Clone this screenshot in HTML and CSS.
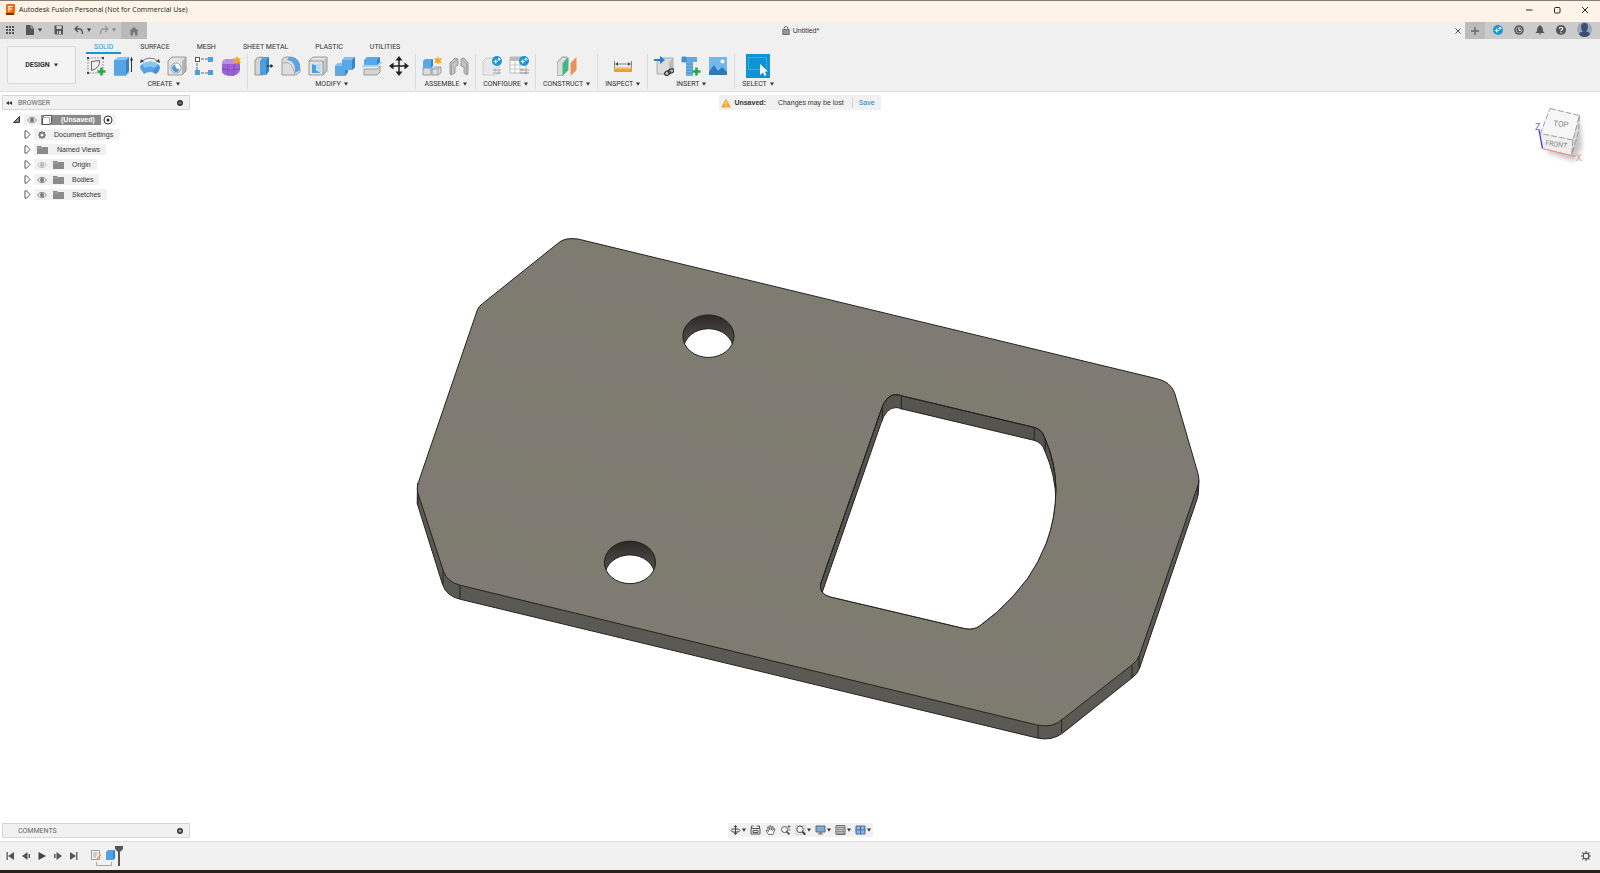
FILE: index.html
```html
<!DOCTYPE html>
<html lang="en">
<head>
  <meta charset="UTF-8">
  <meta name="viewport" content="width=device-width, initial-scale=1.0">
  <title>Autodesk Fusion Personal (Not for Commercial Use)</title>
  <link rel="stylesheet" href="styles.css">
</head>
<body>

<!-- shared symbols -->
<svg class="sprite" aria-hidden="true">
  <symbol id="caret" viewBox="0 0 4 4"><path d="M0 .5h4L2 3.8z" fill="#333"/></symbol>
  <symbol id="eye" viewBox="0 0 10 8"><path d="M.5 4Q5-1.5 9.500 4Q5 9.500.5 4z" fill="#eee" stroke="#888"/><circle cx="5" cy="4" r="2" fill="#777"/></symbol>
  <symbol id="folder" viewBox="0 0 11 9"><path d="M0 1h4l1 1h6v7H0z" fill="#8b8b8b"/><path d="M0 3h5l1-1" stroke="#bbb" fill="none" stroke-width=".6"/></symbol>
  <symbol id="expand" viewBox="0 0 7 9"><path d="M1 .8h1.500L6 4.500 2.500 8.200H1z" fill="#fff" stroke="#555"/></symbol>
  <symbol id="plus-badge" viewBox="0 0 10 10"><circle cx="5" cy="5" r="5" fill="#1a96d8"/><path d="M3.800 3.500v4M1.800 5.500h4M7 1.800v3M5.500 3.300h3" stroke="#fff" stroke-width="1.100"/></symbol>
</svg>

<header class="titlebar">
  <svg class="app-icon" viewBox="0 0 10 11"><path d="M1 1l1-1h8v9l-1 1H1z" fill="#f46b10"/><path d="M1 9h8v2H1z" fill="#7c2c05"/><path d="M4 8V2.500h3.500M4 5h3" stroke="#fff" stroke-width="1.200" fill="none"/></svg>
  <span class="title">Autodesk Fusion Personal (Not for Commercial Use)</span>
  <div class="window-buttons">
    <button aria-label="Minimize"><svg viewBox="0 0 8 8"><path d="M1 4h6.500" stroke="#222"/></svg></button>
    <button aria-label="Maximize"><svg viewBox="0 0 8 8"><rect x="1.500" y="1.500" width="5.500" height="5.500" rx="1" fill="none" stroke="#222"/></svg></button>
    <button aria-label="Close"><svg viewBox="0 0 8 8"><path d="M1 1l6 6M7 1L1 7" stroke="#222"/></svg></button>
  </div>
</header>

<nav class="docbar">
  <div class="quick">
    <button class="q-grid" aria-label="Data panel"><svg viewBox="0 0 10 10" fill="#555"><path d="M1 1h2v2H1zM4 1h2v2H4zM7 1h2v2H7zM1 4h2v2H1zM4 4h2v2H4zM7 4h2v2H7zM1 7h2v2H1zM4 7h2v2H4zM7 7h2v2H7z"/></svg></button>
    <button class="q-file" aria-label="File"><svg viewBox="0 0 10 10"><path d="M1 0h5l3 3v7H1z" fill="#555"/><path d="M6 0v3h3" fill="none" stroke="#ccc" stroke-width=".8"/></svg><svg class="caret"><use href="#caret"/></svg></button>
    <button class="q-save" aria-label="Save"><svg viewBox="0 0 10 10"><path d="M.5.5h8.500v9H1.500l-1-1z" fill="#555"/><path d="M2.500 1h5v3h-5zM3 6h4v3H3z" fill="#ccc"/><path d="M4 6h1v3H4z" fill="#555"/></svg></button>
    <button class="q-undo" aria-label="Undo"><svg viewBox="0 0 10 10"><path d="M4 1L1 4l3 3M1 4h4.500Q8.500 4 8.500 9" fill="none" stroke="#555" stroke-width="1.400"/></svg><svg class="caret"><use href="#caret"/></svg></button>
    <button class="q-redo" aria-label="Redo"><svg viewBox="0 0 10 10"><path d="M6 1l3 3-3 3M9 4H4.500Q1.500 4 1.500 9" fill="none" stroke="#999" stroke-width="1.400"/></svg><svg class="caret off"><use href="#caret"/></svg></button>
  </div>
  <button class="home-tab" aria-label="Home"><svg viewBox="0 0 10 10"><path d="M5 1l4.500 4H8.500v4.500h-2.500V6.500H4v3H1.500V5H.5z" fill="#777"/></svg></button>
  <div class="doc-tab">
    <svg viewBox="0 0 8 10"><path d="M2 4V2.500a2 2 0 014 0V4" fill="none" stroke="#666"/><rect x=".5" y="4" width="7" height="5.500" fill="#999" stroke="#666"/></svg>
    <span>Untitled*</span>
    <button class="close-tab" aria-label="Close tab"><svg viewBox="0 0 8 8"><path d="M1.500 1.500l5 5M6.500 1.500l-5 5" stroke="#555"/></svg></button>
  </div>
  <button class="new-tab" aria-label="New tab"><svg viewBox="0 0 8 8"><path d="M4 0v8M0 4h8" stroke="#666" stroke-width="1.300"/></svg></button>
  <div class="account">
    <button aria-label="Extensions"><svg viewBox="0 0 10 10"><use href="#plus-badge"/></svg></button>
    <button aria-label="Job status"><svg viewBox="0 0 10 10"><circle cx="5" cy="5" r="4.800" fill="#555"/><circle cx="5" cy="5" r="3" fill="none" stroke="#ccc" stroke-width=".7"/><path d="M5 3v2.300h2" stroke="#fff" fill="none"/></svg></button>
    <button aria-label="Notifications"><svg viewBox="0 0 10 10"><path d="M5 0l1 1Q8 2 8 6l1.500 2h-9L2 6Q2 2 4 1zM3.800 8.500h2.400L5 10z" fill="#555"/></svg></button>
    <button aria-label="Help"><svg viewBox="0 0 10 10"><circle cx="5" cy="5" r="5" fill="#555"/><path d="M3.300 3.800Q3.300 2.200 5 2.200t1.700 1.500Q6.700 4.600 5 5.200V6.300M5 7.200v1.200" stroke="#fff" stroke-width="1.100" fill="none"/></svg></button>
    <button class="avatar" aria-label="Profile"><svg viewBox="0 0 15 15"><circle cx="7.500" cy="7.500" r="7.500" fill="#9aa8ba"/><path d="M4 5a3.500 4 0 017 0q0 3-2 4.500 4 .5 4 3Q10.500 15 7.500 15T2 12.500q0-2.500 4-3Q4 8 4 5z" fill="#3b4f70"/></svg></button>
  </div>
</nav>

<section class="ribbon">
  <button class="workspace">DESIGN <svg class="caret"><use href="#caret"/></svg></button>
  <div class="ribbon-main">
    <div class="tabs" role="tablist">
      <button class="tab active" role="tab">SOLID</button>
      <button class="tab" role="tab">SURFACE</button>
      <button class="tab" role="tab">MESH</button>
      <button class="tab" role="tab">SHEET METAL</button>
      <button class="tab" role="tab">PLASTIC</button>
      <button class="tab" role="tab">UTILITIES</button>
    </div>
    <div class="groups">
      <div class="group">
        <div class="tools">
          <button aria-label="Create sketch"><svg viewBox="0 0 20 20"><path d="M2 2h15v15H2z" fill="none" stroke="#999" stroke-dasharray="2 1"/><path d="M5.500 14.500v-9l8-1q1 7-8 10z" fill="#eee" stroke="#666"/><path d="M1 1h2v2H1zM16 1h2v2h-2zM1 16h2v2H1z" fill="#444"/><path d="M15.500 11.500v8M11.500 15.500h8" stroke="#28a745" stroke-width="2.600"/></svg></button>
          <button aria-label="Extrude"><svg viewBox="0 0 20 20"><path d="M1 4l4-3h11l-3 3z" fill="#8ac6f3"/><path d="M1 4h12v15H1z" fill="#55a5e5"/><path d="M13 4l3-3v14l-3 4z" fill="#3584c5"/><path d="M1 19.500h12l4-4" fill="none" stroke="#aaa"/><path d="M18.500 2v14" stroke="#333"/><path d="M17 4.500L18.500.5l1.500 4z" fill="#333"/></svg></button>
          <button aria-label="Revolve"><svg viewBox="0 0 20 20"><path d="M1 6Q10-2 19 6" fill="none" stroke="#555" stroke-width=".8"/><path d="M0 7l1-4 3 2.500zM20 7l-1-4-3 2.500z" fill="#444"/><path d="M2 8q8-5 16 0 2 1 2 4l-4 6q-6-4-12 0L0 12q0-3 2-4z" fill="#55a5e5"/><path d="M2 8q8-5 16 0l-3 4q-5-3-10 0z" fill="#8ac6f3"/><ellipse cx="16.500" cy="14" rx="2.500" ry="4" fill="#4994d2" transform="rotate(30 16.500 14)"/></svg></button>
          <button aria-label="Hole"><svg viewBox="0 0 20 20"><path d="M1 5l4-4h14v14l-4 4H1z" fill="#e2e2e2"/><path d="M15 5l4-4v14l-4 4z" fill="#b5b5b5"/><path d="M1 5l4-4h14v14l-4 4H1z" fill="none" stroke="#888" stroke-width=".8"/><circle cx="9" cy="12" r="5" fill="#fff" stroke="#888" stroke-width=".8"/><path d="M8 8.200A4 4 0 1012.800 13.500Q8 13 8 8.200z" fill="#4a9bd9"/></svg></button>
          <button aria-label="Pattern"><svg viewBox="0 0 20 20"><path d="M3 3h14M3 3v14M3 17h14" stroke="#666" stroke-dasharray="3 1"/><rect x="1.500" y="1.500" width="4" height="4" fill="#fff" stroke="#555"/><path d="M14 1h5v5h-5zM1 14h5v5H1zM14 14h5v5h-5z" fill="#4d9fde"/></svg></button>
          <button aria-label="Create form"><svg viewBox="0 0 20 20"><path d="M1 8q0-5 6-5h6q6 1 6 6v5q-1 5-8 6Q2 20 1 16z" fill="#9a63d3"/><path d="M1 8q0-5 6-5h6q5 0 5 3l-5 2H2z" fill="#bb91e8"/><path d="M13 8q1 6-1 12M7 8q-1 6 0 11M1 13q8 2 18 0" stroke="#7d4cba" stroke-width=".8" fill="none"/><path d="M16 0l1.200 2.500L20 2l-1.500 2.500L20 7l-2.800-.5L16 9l-1.200-2.500L12 7l1.500-2.500L12 2l2.800.5z" fill="#f7a520"/></svg></button>
        </div>
        <button class="label">CREATE <svg class="caret"><use href="#caret"/></svg></button>
      </div>
      <div class="group">
        <div class="tools">
          <button aria-label="Press pull"><svg viewBox="0 0 20 20"><path d="M1 5q1-4 5-4h3v18H1z" fill="#d5d5d5" stroke="#888" stroke-width=".8"/><path d="M6 5l3-4h6v14l-3 4H6z" fill="#4d9fde"/><path d="M12 5l3-4v14l-3 4z" fill="#3482c2"/><path d="M13 10h5" stroke="#222"/><path d="M16.500 8l3 2-3 2z" fill="#222"/></svg></button>
          <button aria-label="Fillet"><svg viewBox="0 0 20 20"><path d="M1 5q0-4 5-4h4q9 1 9 12v3l-4 3H1z" fill="#ddd" stroke="#888" stroke-width=".8"/><path d="M8 1q11 0 11 13l-5 3Q15 5 6 4z" fill="#55a5e5"/><path d="M1 7q11-3 13 12" fill="none" stroke="#aaa"/></svg></button>
          <button aria-label="Shell"><svg viewBox="0 0 20 20"><path d="M1 5l4-4h14v14l-4 4H1z" fill="#e2e2e2"/><path d="M15 5l4-4v14l-4 4z" fill="#c5c5c5"/><path d="M1 5l4-4h14v14l-4 4H1zM1 5h14v14" fill="none" stroke="#888" stroke-width=".8"/><path d="M4 8h9v9H4z" fill="#fff"/><path d="M4 8l4 1v5l5 3H4z" fill="#4d9fde"/><path d="M8 8h5v9l-5-4z" fill="#b9dcf6"/></svg></button>
          <button aria-label="Combine"><svg viewBox="0 0 20 20"><path d="M7 4l3-3h10v10l-3 3h-4v2l-3 4H0V10l3-3h4z" fill="#59a8e8"/><path d="M7 4l3-3h10l-3 3zM0 10l3-3h4v3z" fill="#80c1f1"/><path d="M17 4l3-3v10l-3 3zM10 14h3v2l-3 4z" fill="#3784c4"/></svg></button>
          <button aria-label="Split body"><svg viewBox="0 0 20 20"><path d="M2 4l3-3h13v5l-3 3H2z" fill="#59a8e8"/><path d="M15 4l3-3v5l-3 3z" fill="#3784c4"/><path d="M0 11l2-1h13l5-4" stroke="#8bc9f3" stroke-width="1.300" fill="none"/><path d="M2 13h13l3-3v6l-3 3H2z" fill="#d5d5d5" stroke="#888" stroke-width=".8"/></svg></button>
          <button aria-label="Move"><svg viewBox="0 0 20 20"><path d="M10 2v16M2 10h16" stroke="#222" stroke-width="1.500"/><path d="M6.500 4.500L10 0l3.500 4.500zM6.500 15.500L10 20l3.500-4.500zM4.500 6.500L0 10l4.500 3.500zM15.500 6.500L20 10l-4.500 3.500z" fill="#222"/></svg></button>
        </div>
        <button class="label">MODIFY <svg class="caret"><use href="#caret"/></svg></button>
      </div>
      <div class="group">
        <div class="tools">
          <button aria-label="New component"><svg viewBox="0 0 20 20"><path d="M1 12h8v7H1zM10 13l3-2h6v6l-3 2h-6z" fill="#ddd" stroke="#888" stroke-width=".8"/><path d="M1 5l2-2h8v7l-2 2H1z" fill="#59a8e8"/><path d="M9 5l2-2v7l-2 2z" fill="#3784c4"/><path d="M10 13h6v6M16 13l3-2" fill="none" stroke="#999" stroke-width=".8"/><path d="M16 0l1 2.800L20 2l-1.600 2.700L20 7l-3-.6L16 9l-1-2.600-3 .6 1.600-2.300L12 2l3 .8z" fill="#f7a520"/></svg></button>
          <button aria-label="Joint"><svg viewBox="0 0 20 20"><path d="M1 7l5-5 3 1v6l-3 2v6l-4 2-1-1zM19 7l-4-5-3 1v7l3 1v6l3 2 1-1z" fill="#c5c5c5" stroke="#888" stroke-width=".8"/><path d="M2.500 18V8L8 4M17.500 18V8l-4-4" fill="none" stroke="#999" stroke-width=".8"/></svg></button>
        </div>
        <button class="label">ASSEMBLE <svg class="caret"><use href="#caret"/></svg></button>
      </div>
      <div class="group">
        <div class="tools">
          <button aria-label="Configure"><svg viewBox="0 0 20 20"><path d="M1 5l3-3h13v13l-3 4H1z" fill="#e8e8e8" stroke="#ccc"/><path d="M11 14h8M11 17h8M13 12.500v3M17 15.500v3" stroke="#aaa"/><use href="#plus-badge" x="10" y="0" width="10" height="10"/></svg></button>
          <button aria-label="Configuration table"><svg viewBox="0 0 20 20"><path d="M1 1h16v16H1z" fill="#fff" stroke="#bbb"/><path d="M1 3h16" stroke="#bbb" stroke-width="4"/><path d="M1 9h16M1 13h16M6 5v12M11 5v12" stroke="#c5c5c5"/><path d="M11 14h9M11 17h9M13 12.500v3M17 15.500v3" stroke="#999"/><use href="#plus-badge" x="10" y="0" width="10" height="10"/></svg></button>
        </div>
        <button class="label">CONFIGURE <svg class="caret"><use href="#caret"/></svg></button>
      </div>
      <div class="group">
        <div class="tools">
          <button aria-label="Offset plane"><svg viewBox="0 0 20 20"><path d="M0 7l5-6h5v13l-5 6H0z" fill="#ddd" stroke="#888" stroke-width=".8"/><path d="M5.500 7l6-6v13l-6 6z" fill="#42b883"/><path d="M13.500 7l6-6v13l-6 6z" fill="#e8915b"/></svg></button>
        </div>
        <button class="label">CONSTRUCT <svg class="caret"><use href="#caret"/></svg></button>
      </div>
      <div class="group">
        <div class="tools">
          <button aria-label="Measure"><svg viewBox="0 0 20 20"><path d="M1.500 5v6M18.500 5v6M3 8h14" stroke="#666" stroke-width=".8"/><path d="M5 6L2 8l3 2zM15 6l3 2-3 2z" fill="#555"/><path d="M1 11h18v5H1z" fill="#eaa51c"/><path d="M3 11v2M5 11v2M7 11v2M9 11v2M11 11v2M13 11v2M15 11v2M17 11v2" stroke="#fff" stroke-width=".7"/></svg></button>
        </div>
        <button class="label">INSPECT <svg class="caret"><use href="#caret"/></svg></button>
      </div>
      <div class="group">
        <div class="tools">
          <button aria-label="Insert derive"><svg viewBox="0 0 20 20"><path d="M3 6l4-4h12v12l-4 4H3z" fill="#ddd" stroke="#999" stroke-width=".8"/><path d="M15 6l4-4v12l-4 4z" fill="#bbb"/><path d="M0 4h7" stroke="#267fca" stroke-width="2"/><path d="M6 0l5 4-5 4z" fill="#267fca"/><g fill="none" stroke="#333" stroke-width="1.300"><ellipse cx="13.500" cy="17" rx="3" ry="2" transform="rotate(-30 13.500 17)"/><ellipse cx="17" cy="15" rx="3" ry="2" transform="rotate(-30 17 15)"/></g></svg></button>
          <button aria-label="Insert fastener"><svg viewBox="0 0 20 20"><path d="M1 1h15v5H1z" fill="#62a9df"/><path d="M5 6h7v14H5z" fill="#6cb2e7"/><path d="M1 1h4v5H1zM5 8h7M5 11h7M5 14h7M5 17h7" stroke="#4487bc" stroke-width=".8" fill="#4c93cb"/><path d="M15.500 11.500v8M11.500 15.500h8" stroke="#28a745" stroke-width="2.600"/></svg></button>
          <button aria-label="Canvas"><svg viewBox="0 0 20 20"><path d="M1 1h18v18H1z" fill="#73b7ed"/><path d="M1 16l5-7 4 6 4-4 5 5v3H1z" fill="#2e78b8"/><circle cx="14.500" cy="5.500" r="2" fill="#fff"/></svg></button>
        </div>
        <button class="label">INSERT <svg class="caret"><use href="#caret"/></svg></button>
      </div>
      <div class="group">
        <div class="tools">
          <button class="select-tool" aria-label="Select"><svg viewBox="0 0 24 24"><path d="M0 0h24v24H0z" fill="#0d93d6"/><path d="M2.500 3.500h18v12h-18z" fill="none" stroke="#66d0a0" stroke-width=".8" stroke-dasharray="2 1"/><path d="M14 10v11l3-2.500 1.500 3.500 1.800-1-1.500-3.500H22z" fill="#fff"/></svg></button>
        </div>
        <button class="label">SELECT <svg class="caret"><use href="#caret"/></svg></button>
      </div>
    </div>
  </div>
</section>

<main class="viewport">
  <svg class="model" viewBox="0 91 1600 750" role="img" aria-label="Plate body">
    <defs>
      <linearGradient id="face" gradientUnits="userSpaceOnUse" x1="600" y1="245" x2="593" y2="283" spreadMethod="reflect">
        <stop offset="0" stop-color="#7e7c6f"/>
        <stop offset="1" stop-color="#807a74"/>
      </linearGradient>
      <linearGradient id="bore" x1="0" x2="0" y1="0" y2="1">
        <stop offset="0" stop-color="#2a2826"/>
        <stop offset=".5" stop-color="#4a4743"/>
      </linearGradient>
      <clipPath id="hole-a"><ellipse cx="708.300" cy="335.500" rx="25.600" ry="21.300"/></clipPath>
      <clipPath id="hole-b"><ellipse cx="629.700" cy="562" rx="25.600" ry="21.300"/></clipPath>
      <path id="cutout" d="M881 410Q886 394 896 394 899 394 902 395.300L1034 426.700Q1042 428.500 1045 437 1056 462 1056.300 488 1056 518 1046.500 543 1039 562 1028 578 1014 597 997 612L980 625.500Q974 630 965 628.300L830 596.500Q819 593 820.500 584z"/>
      <clipPath id="cutout-clip"><use href="#cutout"/></clipPath>
    </defs>
    <g stroke="#24231f" stroke-linejoin="round">
      <path fill="#5a5953" d="M417 483L416.700 503 442 584Q446 596 460 599L1038 738Q1052 741 1063 733L1132 678Q1138 674 1140 668L1197.500 499Q1199 496 1199.500 480z"/>
      <path fill="url(#face)" d="M557 243Q564 236 578 238.300L1157 378Q1171 381 1175 392L1198.500 473Q1200.500 479 1198.500 485L1140 655Q1138 661 1132 665L1063 719Q1053 728 1038 725L460 585Q447 582 443 571L417.500 493Q416 488 417.500 483L477 309Q478 306 482 303z"/>
      <path fill="none" d="M459.500 585v14M442.500 571v13M1038.500 725v13M1062 719v13M1132.500 665v13M1139.500 656v12M417.500 494v10M1198.500 485v10"/>
      <use href="#cutout" fill="#55544e"/>
      <g clip-path="url(#cutout-clip)">
        <use href="#cutout" transform="translate(0 13)" fill="#fff"/>
        <path d="M901.500 395v14M1034.500 427v13M1045.500 437v14M882.500 408v12" fill="none"/>
      </g>
      <use href="#cutout" fill="none"/>
      <g clip-path="url(#hole-a)">
        <ellipse cx="708.300" cy="335.500" rx="25.600" ry="21.300" fill="url(#bore)"/>
        <ellipse cx="708.300" cy="349" rx="25" ry="21" fill="#fff"/>
      </g>
      <ellipse cx="708.300" cy="335.500" rx="25.600" ry="21.300" fill="none"/>
      <g clip-path="url(#hole-b)">
        <ellipse cx="629.700" cy="562" rx="25.600" ry="21.300" fill="url(#bore)"/>
        <ellipse cx="629.700" cy="575.500" rx="25" ry="21" fill="#fff"/>
      </g>
      <ellipse cx="629.700" cy="562" rx="25.600" ry="21.300" fill="none"/>
    </g>
  </svg>

  <div class="overlay">
    <aside class="browser">
      <div class="panel-head">
        <svg class="collapse" viewBox="0 0 6 6"><path d="M3 1v4L0 3zM6 1v4L3 3z" fill="#333"/></svg>
        <span>BROWSER</span>
        <button aria-label="Hide browser"><svg viewBox="0 0 6 6"><circle cx="3" cy="3" r="3" fill="#333"/><path d="M1.500 3h3" stroke="#bbb"/></svg></button>
      </div>
      <ul class="tree">
        <li class="root">
          <svg class="arrow" viewBox="0 0 7 9"><path d="M6.500 1.500v6h-6z" fill="#888" stroke="#333"/></svg>
          <div class="row">
            <svg class="eye"><use href="#eye"/></svg>
            <span class="doc"><svg viewBox="0 0 10 10"><path d="M.5 2.500l2-2h7v7l-2 2h-7z" fill="#fff" stroke="#555"/><path d="M.5 2.500h7v7" fill="none" stroke="#aaa"/></svg>(Unsaved)</span>
            <svg class="target" viewBox="0 0 10 10"><circle cx="5" cy="5" r="4" fill="#fff" stroke="#333"/><circle cx="5" cy="5" r="1.500" fill="#222"/></svg>
          </div>
        </li>
        <li><svg class="arrow"><use href="#expand"/></svg>
          <div class="row"><svg class="eye" viewBox="0 0 10 10"><circle cx="5" cy="5" r="3" fill="none" stroke="#777" stroke-width="2"/><path d="M5 0v2M5 8v2M0 5h2M8 5h2M1.500 1.500l1.300 1.300M7.200 7.200l1.300 1.300M8.500 1.500L7.200 2.800M1.500 8.500l1.300-1.300" stroke="#777" stroke-width="1.300"/></svg><span>Document Settings</span></div></li>
        <li><svg class="arrow"><use href="#expand"/></svg>
          <div class="row views"><svg class="folder"><use href="#folder"/></svg><span>Named Views</span></div></li>
        <li><svg class="arrow"><use href="#expand"/></svg>
          <div class="row item"><svg class="eye off"><use href="#eye"/></svg><svg class="folder"><use href="#folder"/></svg><span>Origin</span></div></li>
        <li><svg class="arrow"><use href="#expand"/></svg>
          <div class="row item"><svg class="eye"><use href="#eye"/></svg><svg class="folder"><use href="#folder"/></svg><span>Bodies</span></div></li>
        <li><svg class="arrow"><use href="#expand"/></svg>
          <div class="row item"><svg class="eye"><use href="#eye"/></svg><svg class="folder"><use href="#folder"/></svg><span>Sketches</span></div></li>
      </ul>
    </aside>

    <div class="notice">
      <svg viewBox="0 0 10 10"><path d="M5 .5l4.800 9H.2z" fill="#f5a32b"/><path d="M5 3.500v3M5 7.500v1" stroke="#fff"/></svg>
      <strong>Unsaved:</strong>
      <span>Changes may be lost</span>
      <a href="#save">Save</a>
    </div>

    <svg class="cube" viewBox="1530 100 60 70" role="img" aria-label="View cube">
      <defs><filter id="soft"><feGaussianBlur stdDeviation="2.500"/></filter></defs>
      <path d="M1546 152l28 9 8-14-2-26-6 5z" fill="#c4c4c4" filter="url(#soft)"/>
      <path d="M1550 108.500l29.500 7-6.500 24.500-32.500-6.500z" fill="#f6f6f6"/>
      <path d="M1540.500 133.500L1573 140l-1.500 15.500-29-7z" fill="#eee"/>
      <path d="M1579.500 115.500l-1 16-7 24 1.500-15.500z" fill="#dedede"/>
      <path d="M1550 108.500l29.500 7-6.500 24.500-32.500-6.500zM1573 140l-1.500 15.500M1579.500 115.500l-1 16-7 24" fill="none" stroke="#888" stroke-width=".8" stroke-dasharray="6 2"/>
      <path d="M1539 130l3.500 18.500" stroke="#3c35e8" stroke-width="1.300"/>
      <path d="M1542.500 148.500l33 8" stroke="#f18080"/>
      <text class="cube-top" x="1553" y="126" transform="rotate(6 1553 126)">TOP</text>
      <text class="cube-front" x="1545" y="145" transform="rotate(8 1545 145)">FRONT</text>
      <text class="axis-z" x="1535" y="130">Z</text>
      <text class="axis-x" x="1576" y="161">X</text>
    </svg>

    <div class="panel-head comments">
      <span>COMMENTS</span>
      <button aria-label="Add comment"><svg viewBox="0 0 6 6"><circle cx="3" cy="3" r="3" fill="#333"/><path d="M1.500 3h3M3 1.500v3" stroke="#ccc"/></svg></button>
    </div>

    <div class="navbar">
      <button aria-label="Orbit"><svg viewBox="0 0 10 10" fill="none" stroke="#444"><path d="M5 1v8"/><ellipse cx="5" cy="5.500" rx="4.500" ry="1.700"/><path d="M3.500 2L5 .5 6.500 2M3.500 8L5 9.500 6.500 8"/></svg><svg class="caret"><use href="#caret"/></svg></button>
      <button aria-label="Look at"><svg viewBox="0 0 10 10"><path d="M.5 3.500h9V9h-9z" fill="#eee" stroke="#555"/><path d="M1 3V1h2M6 1h3v2M2.500 5.500h5v2h-5z" fill="none" stroke="#555"/></svg></button>
      <button aria-label="Pan"><svg viewBox="0 0 10 10"><path d="M3 9.500L.6 5.500l1-.5L3 6.500 2 2l1-.3L4.200 5V.7h1.200L5.800 5l1-3.600 1 .3L7.300 5.500l1.300-2 .9.500L7.500 9.500z" fill="#fff" stroke="#555" stroke-width=".8"/></svg></button>
      <button aria-label="Zoom"><svg viewBox="0 0 10 10"><circle cx="4" cy="4.500" r="3" fill="#fff" stroke="#555"/><path d="M6 6.500l3 3" stroke="#444" stroke-width="1.600"/><path d="M8.500 0v3.500M7 1.500h3M7 5h3" stroke="#555" stroke-width=".8"/></svg></button>
      <button aria-label="Fit"><svg viewBox="0 0 10 10"><path d="M.5.5h9v9h-9z" fill="none" stroke="#aaa" stroke-dasharray="2 1" stroke-width=".7"/><circle cx="4.500" cy="4.300" r="3.300" fill="#eef5ee" stroke="#555"/><path d="M6.800 6.700l3 3" stroke="#333" stroke-width="1.700"/></svg><svg class="caret"><use href="#caret"/></svg></button>
      <button aria-label="Display settings"><svg viewBox="0 0 10 10"><path d="M.5 1h9v6h-9z" fill="#79aee0" stroke="#666"/><path d="M4 7v1.500H2.500v1h5v-1H6V7z" fill="#777"/></svg><svg class="caret"><use href="#caret"/></svg></button>
      <button aria-label="Grid"><svg viewBox="0 0 10 10"><path d="M.5.5h9v9h-9z" fill="#eee" stroke="#777"/><path d="M2.500 0v10M4.500 0v10M6.500 0v10M8.300 0v10M0 2.500h10M0 4.500h10M0 6.500h10M0 8.300h10" stroke="#777" stroke-width=".7"/></svg><svg class="caret"><use href="#caret"/></svg></button>
      <button aria-label="Viewports"><svg viewBox="0 0 10 10"><path d="M.5 1h9v8h-9z" fill="#8bb8e8" stroke="#456a9c"/><path d="M5 1v8M0 5h10" stroke="#456a9c"/></svg><svg class="caret"><use href="#caret"/></svg></button>
    </div>
  </div>
</main>

<footer class="timeline">
  <div class="playback">
    <button aria-label="Go to start"><svg viewBox="0 0 8 8" fill="#555"><path d="M.5 0h1.300v8H.5zM8 0v8L2 4z"/></svg></button>
    <button aria-label="Step back"><svg viewBox="0 0 8 8" fill="#555"><path d="M5.500 0v8L0 4zM6.500 2h1.500v4H6.500z"/></svg></button>
    <button aria-label="Play"><svg viewBox="0 0 8 8" fill="#444"><path d="M.5 0v8L8 4z"/></svg></button>
    <button aria-label="Step forward"><svg viewBox="0 0 8 8" fill="#555"><path d="M2.500 0v8L8 4zM0 2h1.500v4H0z"/></svg></button>
    <button aria-label="Go to end"><svg viewBox="0 0 8 8" fill="#555"><path d="M6.200 0h1.300v8H6.200zM0 0v8l6-4z"/></svg></button>
  </div>
  <svg class="features" viewBox="0 0 36 22">
    <path d="M1.500 5.500h8v9h-8z" fill="#fafafa" stroke="#999"/><path d="M3 8h5M3 10h4M3 12h3" stroke="#888" stroke-width=".8"/><path d="M6 14l4-5 1.500 1-4 4.500z" fill="#f0a347"/>
    <path d="M16 7l2-2h7v8l-2 2h-7z" fill="#4ea3e4"/><path d="M23 7l2-2v8l-2 2z" fill="#3481c3"/>
    <path d="M6.500 17v3.500h15V17" fill="none" stroke="#aaa"/>
    <path d="M25 1h8v3l-3 3v14h-2V7l-3-3z" fill="#555"/>
  </svg>
  <button class="settings" aria-label="Timeline settings"><svg viewBox="0 0 10 10"><circle cx="5" cy="5" r="2.800" fill="none" stroke="#555" stroke-width="1.200"/><path d="M5 0v2M5 8v2M0 5h2M8 5h2M1.500 1.500l1.300 1.300M7.200 7.200l1.300 1.300M8.500 1.500L7.200 2.800M1.500 8.500l1.300-1.300" stroke="#555" stroke-width="1.200"/></svg></button>
</footer>

</body>
</html>
```
FILE: styles.css
```css
* {
  box-sizing: border-box;
}

body {
  margin: 0;
  height: 100vh;
  display: flex;
  flex-direction: column;
  overflow: hidden;
  background: #fff;
  color: #333;
  font: 7px/10px "Liberation Sans", Arial, sans-serif;
  border-bottom: 3px solid #2b211c;
}

button {
  margin: 0;
  padding: 0;
  border: none;
  background: none;
  color: inherit;
  font: inherit;
  display: flex;
  align-items: center;
  justify-content: center;
}

svg {
  display: block;
  flex: none;
}

.sprite {
  position: absolute;
  width: 0;
  height: 0;
}

.caret {
  width: 4px;
  height: 4px;
}

/* Title bar */
.titlebar {
  height: 22px;
  flex: none;
  display: flex;
  align-items: center;
  gap: 4px;
  padding: 0 1px 4px 5px;
  background: #fdf3e7;
  border-top: 1px solid #8b7d74;
}

.app-icon {
  width: 10px;
  height: 11px;
}

.title {
  flex: 1;
  color: #222;
  font-family: "Open Sans", sans-serif;
}

.window-buttons {
  display: flex;
}

.window-buttons button {
  width: 28px;
  height: 16px;
}

.window-buttons svg {
  width: 8px;
  height: 8px;
}

/* Document tab bar */
.docbar {
  height: 17px;
  flex: none;
  display: flex;
  background: #cbcbcb;
}

.quick {
  width: 121px;
  display: flex;
  align-items: center;
  padding: 0 0 2px 5px;
}

.quick button {
  gap: 3px;
}

.quick svg:first-child {
  width: 10px;
  height: 10px;
}

.q-file {
  margin-left: 10px;
}

.q-save {
  margin-left: 12px;
}

.q-undo {
  margin-left: 10px;
}

.q-redo {
  margin-left: 8px;
}

.home-tab {
  width: 26px;
  background: #bababa;
}

.home-tab svg {
  width: 10px;
  height: 10px;
}

.doc-tab {
  flex: 1;
  display: grid;
  grid-template-columns: 1fr auto 1fr;
  align-items: center;
  gap: 3px;
  background: #f0f0f0;
}

.doc-tab > svg {
  width: 8px;
  height: 9px;
  justify-self: end;
}

.close-tab {
  justify-self: end;
  margin-right: 3px;
}

.close-tab svg {
  width: 8px;
  height: 8px;
}

.new-tab {
  width: 20px;
  background: #bcbcbc;
}

.new-tab svg {
  width: 8px;
  height: 8px;
}

.account {
  display: flex;
  align-items: center;
  gap: 11px;
  padding: 0 8px 2px;
}

.account svg {
  width: 10px;
  height: 10px;
}

.account .avatar svg {
  width: 15px;
  height: 15px;
}

/* Ribbon */
.ribbon {
  flex: none;
  height: 53px;
  display: flex;
  padding-left: 7px;
  background: #f0f0f0;
  border-bottom: 1px solid #dedede;
}

.workspace {
  width: 69px;
  height: 38px;
  margin: 7px 4px 0 0;
  gap: 4px;
  border: 1px solid #d8d8d8;
  border-radius: 2px;
  background: #f4f4f4;
  font-family: Roboto, sans-serif;
  font-weight: bold;
}

.tabs {
  display: flex;
  gap: 11px;
  padding-left: 6px;
  font-family: Roboto, sans-serif;
}

.tab {
  height: 15px;
  padding: 2px 8px 0;
  border-bottom: 2px solid transparent;
}

.tab.active {
  color: #1a96d8;
  border-bottom-color: #1a96d8;
}

.groups {
  display: flex;
}

.group {
  padding: 1px 6px 0;
  border-left: 1px solid #dadada;
  display: flex;
  flex-direction: column;
  align-items: center;
  gap: 2px;
  height: 35px;
}

.group:first-child {
  border-left: none;
}

.tools {
  display: flex;
  gap: 7px;
  height: 22px;
  align-items: center;
}

.tools svg {
  width: 20px;
  height: 20px;
}

.tools .select-tool svg {
  width: 24px;
  height: 24px;
}

.label {
  gap: 3px;
  padding: 0 1px;
  font-family: Roboto, sans-serif;
}

/* Viewport */
.viewport {
  flex: 1;
  min-height: 0;
  position: relative;
}

.model {
  position: absolute;
  inset: 0;
  width: 100%;
  height: 100%;
}

.overlay {
  position: relative;
  height: 100%;
  padding: 3px 2px;
  display: grid;
  grid-template-columns: 1fr auto 1fr;
  grid-template-rows: 1fr auto;
  align-items: start;
}

.panel-head {
  width: 188px;
  height: 15px;
  display: flex;
  align-items: center;
  padding: 0 6px 0 3px;
  background: #f1f1f1;
  border: 1px solid #d5d5d5;
  color: #666;
}

.panel-head span {
  flex: 1;
  font-family: Roboto, sans-serif;
}

.panel-head svg {
  width: 6px;
  height: 6px;
}

.collapse {
  margin-right: 6px;
}

.comments {
  padding-left: 15px;
}

.tree {
  margin: 2px 0 0;
  padding: 0;
  list-style: none;
}

.tree li {
  height: 15px;
  display: flex;
  align-items: center;
  gap: 3px;
  padding-left: 22px;
}

.tree .root {
  padding-left: 11px;
  gap: 4px;
}

.arrow {
  width: 7px;
  height: 9px;
}

.row {
  height: 11px;
  display: flex;
  align-items: center;
  padding: 0 6px 0 3px;
  background: #f1f1f1;
}

.row > span {
  margin-left: 7px;
}

.row.item > span {
  margin-left: 8px;
}

.row.views > span {
  margin-left: 9px;
}

.eye {
  width: 10px;
  height: 8px;
}

.off {
  opacity: .5;
}

.folder {
  width: 11px;
  height: 9px;
}

.item .folder {
  margin-left: 6px;
}

.row > .doc {
  height: 10px;
  display: flex;
  align-items: center;
  gap: 9px;
  margin: 0 2px 0 4px;
  padding: 0 6px 0 1px;
  background: #8a8a8a;
  color: #fff;
  font-weight: bold;
}

.root .row {
  padding-right: 3px;
}

.doc svg,
.target {
  width: 10px;
  height: 10px;
}

.notice {
  height: 15px;
  display: flex;
  align-items: center;
  padding: 0 6px 0 2px;
  background: #f1f1f1;
}

.notice svg {
  width: 10px;
  height: 10px;
  margin-right: 3px;
}

.notice span {
  margin-left: 12px;
  padding-right: 8px;
  border-right: 1px solid #d5d5d5;
}

.notice a {
  margin-left: 6px;
  color: #1a7fc1;
  text-decoration: none;
}

.cube {
  width: 60px;
  height: 70px;
  justify-self: end;
  margin: 5px 8px 0 0;
}

.cube text {
  fill: #888;
  font-family: Roboto, sans-serif;
}

.cube-top {
  font-size: 8px;
}

.cube-front {
  font-size: 7px;
}

.cube .axis-z {
  font-size: 9px;
  fill: #6f6af0;
}

.cube .axis-x {
  font-size: 9px;
  fill: #f28a8a;
}

.navbar {
  height: 14px;
  justify-self: center;
  display: flex;
  align-items: center;
  gap: 4px;
  padding: 0 2px;
  background: #f1f1f1;
}

.navbar button {
  gap: 1px;
}

.navbar svg:first-child {
  width: 11px;
  height: 10px;
}

/* Timeline */
.timeline {
  flex: none;
  height: 29px;
  display: flex;
  align-items: center;
  padding: 0 9px 0 6px;
  background: #f1f1f1;
  border-top: 1px solid #ddd;
}

.playback {
  display: flex;
  gap: 8px;
}

.playback svg {
  width: 8px;
  height: 8px;
}

.features {
  width: 36px;
  height: 22px;
  margin-left: 12px;
}

.settings {
  margin-left: auto;
}

.settings svg {
  width: 10px;
  height: 10px;
}
```
